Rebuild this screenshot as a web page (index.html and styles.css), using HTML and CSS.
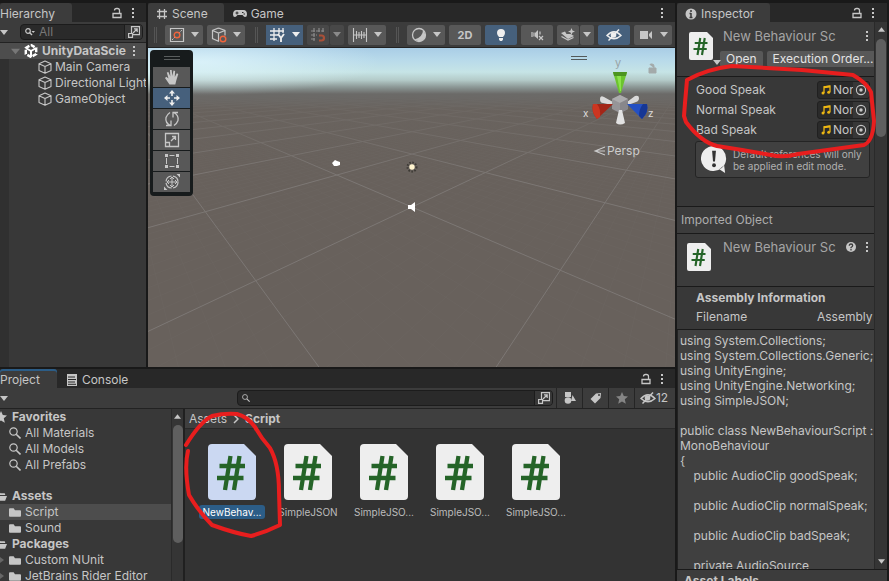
FILE: index.html
```html
<!DOCTYPE html>
<html lang="en">
<head>
<meta charset="utf-8">
<title>Unity Editor</title>
<link rel="stylesheet" href="styles.css">
</head>
<body>
<svg class="defs" aria-hidden="true">
  <defs>
    <symbol id="i-lock" viewBox="0 0 10 12"><path d="M1 6.500h8v4H1zM7.500 6V3.500Q7.500 1.500 5.500 1.500H4.500Q2.500 1.500 2.500 3.500" fill="none" stroke="currentColor" stroke-width="1.300"/></symbol>
    <symbol id="i-dots" viewBox="0 0 4 12"><path d="M1 1h2v2H1zM1 5h2v2H1zM1 9h2v2H1z" fill="currentColor"/></symbol>
    <symbol id="i-caret" viewBox="0 0 8 5"><path d="M0 0h8L4 5z" fill="currentColor"/></symbol>
    <symbol id="i-search" viewBox="0 0 12 12"><circle cx="4.500" cy="4.500" r="3.700" fill="none" stroke="currentColor" stroke-width="1.200"/><path d="M7.200 7.200 11.500 11.500" stroke="currentColor" stroke-width="1.600"/></symbol>
    <symbol id="i-pick" viewBox="0 0 12 12"><path d="M3.500 7V.6h8v8H5M.6 7.500h3.900v3.900H.6zM5 7l4-4M6 2.800h3.200V6" fill="none" stroke="currentColor" stroke-width="1.200"/></symbol>
    <symbol id="i-cube" viewBox="0 0 14 14"><path d="M7 1l6 2.800v6.800L7 13.300 1 10.600V3.800zM1 3.800l6 2.700 6-2.700M7 6.500v6.800" fill="none" stroke="currentColor" stroke-width="1.100" stroke-linejoin="round"/></symbol>
    <symbol id="i-grid" viewBox="0 0 12 12"><path d="M3.500 1v10M8.500 1v10M1 3.500h10M1 8.500h10" stroke="currentColor" stroke-width="1.300"/></symbol>
    <symbol id="i-folder" viewBox="0 0 13 11"><path d="M0 2Q0 1 1 1h4l1.500 2H12q1 0 1 1v5q0 1-1 1H1Q0 10 0 9z" fill="currentColor"/></symbol>
    <symbol id="i-open" viewBox="0 0 13 11"><path d="M0 9V2Q0 1 1 1h4l1 1h4q1 0 1 1v1H2zM2.500 5H13l-2 5H0z" fill="currentColor"/></symbol>
    <symbol id="i-star" viewBox="0 0 12 12"><path d="M6 0l1.800 4 4.200.4-3.200 2.900 1 4.500L6 9.500l-3.800 2.300 1-4.500L0 4.400 4.200 4z" fill="currentColor"/></symbol>
    <symbol id="i-file" viewBox="0 0 48 56"><path d="M4 0h32l12 12v40q0 4-4 4H4q-4 0-4-4V4q0-4 4-4z" fill="currentColor"/><path d="M22.500 12 17 46M31.500 12 26 46M11.500 22H37M9 34h26.500" stroke="#256428" stroke-width="4.300"/></symbol>
    <symbol id="i-note" viewBox="0 0 10 10"><path d="M3 8V1.800L9 1v6" fill="none" stroke="currentColor" stroke-width="1.300"/><path d="M3 2.300 9 1.500" stroke="currentColor" stroke-width="2"/><circle cx="2" cy="8" r="1.500" fill="currentColor"/><circle cx="7.700" cy="7.200" r="1.500" fill="currentColor"/></symbol>
    <symbol id="i-target" viewBox="0 0 12 12"><circle cx="6" cy="6" r="4.600" fill="none" stroke="currentColor" stroke-width="1.100"/><circle cx="6" cy="6" r="1.700" fill="currentColor"/></symbol>
    <symbol id="i-eye" viewBox="0 0 16 12"><path d="M1 6.500Q8-1 15 6.500 8 13 1 6.500z" fill="none" stroke="currentColor" stroke-width="1.500"/><circle cx="7.500" cy="6" r="2.800" fill="currentColor"/><path d="M2.500 11.500 13 .5" stroke="currentColor" stroke-width="1.500"/></symbol>
    <symbol id="i-up" viewBox="0 0 8 5"><path d="M0 5h8L4 0z" fill="currentColor"/></symbol>
  </defs>
</svg>

<main class="editor">
  <section class="panel hierarchy">
    <div class="tabs">
      <button class="tab active first">Hierarchy</button>
      <span class="tab-tools"><svg class="lock"><use href="#i-lock"/></svg><svg class="dots"><use href="#i-dots"/></svg></span>
    </div>
    <div class="bar search-bar">
      <svg class="caret"><use href="#i-caret"/></svg>
      <div class="search">
        <svg class="glass-menu" viewBox="0 0 10 8"><circle cx="3" cy="3" r="2.300" fill="none" stroke="currentColor" stroke-width="1.200"/><path d="M4.500 4.500 7 7" stroke="currentColor" stroke-width="1.400"/><path d="M6.500 3H10L8.200 5z" fill="currentColor"/></svg>
        <input type="text" aria-label="Search hierarchy" placeholder="All">
        <button class="pick" aria-label="Open search"><svg class="i12"><use href="#i-pick"/></svg></button>
      </div>
    </div>
    <ul class="tree">
      <li class="scene-row">
        <svg class="fold"><use href="#i-caret"/></svg>
        <svg class="i14 white" viewBox="0 0 14 14"><path d="M7 1 12.200 4v6L7 13 1.800 10V4z" fill="none" stroke="currentColor" stroke-width="2.400" stroke-dasharray="4.200 1.800"/><path d="M7 7V13M7 7 1.800 4M7 7l5.200-3" stroke="currentColor" stroke-width="2"/></svg>
        <b>UnityDataScie</b>
        <svg class="dots"><use href="#i-dots"/></svg>
      </li>
      <li><svg class="i14"><use href="#i-cube"/></svg><span>Main Camera</span></li>
      <li><svg class="i14"><use href="#i-cube"/></svg><span>Directional Light</span></li>
      <li><svg class="i14"><use href="#i-cube"/></svg><span>GameObject</span></li>
    </ul>
  </section>

  <section class="panel scene">
    <div class="tabs">
      <button class="tab active"><svg class="i12"><use href="#i-grid"/></svg>Scene</button>
      <button class="tab"><svg class="pad" viewBox="0 0 14 9"><path d="M3.500 1h7Q14 1 14 5.500 14 8 12 8 11 8 9.500 6h-5Q3 8 2 8 0 8 0 5.500 0 1 3.500 1z" fill="currentColor"/><path d="M2.500 4h3M4 2.500v3M9 3.500h1.500M10.500 5H12" stroke="#282828"/></svg>Game</button>
      <span class="tab-tools"><svg class="dots"><use href="#i-dots"/></svg></span>
    </div>
    <div class="bar tools">
      <i class="grip"></i>
      <button class="tool wide" aria-label="Pivot"><svg class="i16" viewBox="0 0 16 16"><path d="M1.500 1.500h13v13h-13z" fill="none" stroke="currentColor" stroke-width="1.200"/><path d="M3 13 13 3" stroke="currentColor" stroke-dasharray="2 1"/><circle cx="8" cy="8" r="2.800" fill="#585858" stroke="#f0643c" stroke-width="1.400"/></svg><svg class="caret"><use href="#i-caret"/></svg></button>
      <button class="tool wide" aria-label="Local"><svg class="i16" viewBox="0 0 16 16"><path d="M7.500 1l6.500 2.500v5M8 14.500 1.500 11.500V3.500L7.500 1M1.500 3.500l6 2.500L14 3.500M7.500 6v8" fill="none" stroke="currentColor" stroke-width="1.200"/><circle cx="12" cy="12" r="2.800" fill="#585858" stroke="#f0643c" stroke-width="1.400"/></svg><svg class="caret"><use href="#i-caret"/></svg></button>
      <i class="grip"></i>
      <span class="split on"><button aria-label="Grid"><svg class="i16" viewBox="0 0 16 16"><path d="M5 1v13M10 1v6M1 4h14M1 8h8M1 12h7M14 1v5" fill="none" stroke="currentColor" stroke-width="1.300"/><path d="M9 7l3 4 3-4M12 10.500V15" fill="none" stroke="currentColor" stroke-width="1.900"/></svg></button><button aria-label="Grid options"><svg class="caret"><use href="#i-caret"/></svg></button></span>
      <span class="split dim"><button aria-label="Snap"><svg class="i16" viewBox="0 0 16 16"><path d="M4 1v13M9 1v5M13 1v5M1 4h13M1 8h6M1 12h5" stroke="currentColor" stroke-width="1.200" stroke-dasharray="4 1"/><path d="M9 8.500h2.500q2.500 0 2.500 2.500t-2.500 2.500H9" fill="none" stroke="#a85038" stroke-width="2.200"/></svg></button><button aria-label="Snap options"><svg class="caret"><use href="#i-caret"/></svg></button></span>
      <button class="tool wide" aria-label="Increment"><svg class="i16" viewBox="0 0 16 16"><path d="M1.500 1v14M14.500 1v14M4.500 4v8M7 5v6M9.500 4v8M12 5v6M1 8h14" stroke="currentColor" stroke-width="1.100"/></svg><svg class="caret"><use href="#i-caret"/></svg></button>
      <i class="grip"></i>
      <button class="tool wide" aria-label="Shading"><svg class="i16" viewBox="0 0 16 16"><circle cx="8" cy="8" r="6.500" fill="none" stroke="currentColor" stroke-width="1.300"/><path d="M12 3q0 7-8.500 9.500 6 4 10-1 2-5-1.500-8.500z" fill="currentColor"/></svg><svg class="caret"><use href="#i-caret"/></svg></button>
      <button class="tool label">2D</button>
      <button class="tool on" aria-label="Lighting"><svg class="i16" viewBox="0 0 16 16"><path d="M8 2q4 0 4 4 0 2-2 4H6Q4 8 4 6q0-4 4-4zM6 11h4v1.500L9 14H7l-1-1.500z" fill="currentColor"/></svg></button>
      <button class="tool" aria-label="Audio"><svg class="i16" viewBox="0 0 16 16"><path d="M3 5v5M5 5.500v4" stroke="currentColor" stroke-width="1.200"/><path d="M6 6l3-3v9L6 9.500z" fill="currentColor"/><path d="M10 9l4 4M14 9l-4 4M11 4.500v3" stroke="currentColor" stroke-width="1.200"/></svg></button>
      <span class="split"><button aria-label="Effects"><svg class="i16" viewBox="0 0 16 16"><path d="M1 6l4-1.500 1.500 2.500h4L14 9l-6 3z" fill="currentColor"/><path d="M1.500 9.500 8 13l5.500-2.500" fill="none" stroke="currentColor" stroke-width="1.300"/><path d="M11.500 1l1 2.500L15 4.500l-2.500 1-1 2.500-1-2.500L8 4.500l2.500-1z" fill="currentColor"/></svg></button><button aria-label="Effect options"><svg class="caret"><use href="#i-caret"/></svg></button></span>
      <button class="tool on" aria-label="Visibility"><svg class="eye"><use href="#i-eye"/></svg></button>
      <button class="tool wide" aria-label="Camera"><svg class="i16" viewBox="0 0 16 16"><path d="M2 4h8v8H2zM11 7l3-3v8l-3-3z" fill="currentColor"/></svg><svg class="caret"><use href="#i-caret"/></svg></button>
    </div>
    <div class="viewport">
      <svg class="floor" id="floor" viewBox="0 0 527 319" preserveAspectRatio="xMidYMin slice"></svg>
      <div class="haze"></div>
      <svg class="marks" viewBox="0 0 527 319" preserveAspectRatio="xMidYMin slice">
        <path d="M184 115l3-3 2 1 3 1v3l-3 1h-3z" fill="#fff"/>
        <circle cx="264" cy="119" r="4.500" fill="none" stroke="#3c3934" stroke-width="2" stroke-dasharray="1.500 1.500"/><circle cx="264" cy="119" r="2.700" fill="#fff4cf"/>
        <path d="M260 157h3l4-3v10l-4-3h-3z" fill="#fff"/>
      </svg>
      <div class="palette">
        <i class="handle"></i>
        <button aria-label="View"><svg class="i16" viewBox="0 0 16 16"><path d="M5.500 15.500 1 9l1.300-1.200L4.500 9.500 2.800 3.500 4.400 3 6.300 7.500 6 1h1.700l.6 6 1.200-5.500 1.600.4L10.800 8l2-3.800 1.500.8-2 6.500-1 4z" fill="currentColor"/></svg></button>
        <button class="on" aria-label="Move"><svg class="i16" viewBox="0 0 16 16"><path d="M8 2v4M8 10v4M2 8h4M10 8h4" stroke="currentColor" stroke-width="1.600"/><path d="M8 0l3 3.500H5zM8 16l3-3.500H5zM0 8l3.500-3v6zM16 8l-3.500-3v6z" fill="currentColor"/></svg></button>
        <button aria-label="Rotate"><svg class="i16" viewBox="0 0 16 16"><path d="M6.500 14.500Q1 12 2 6.500 3 3.500 6 1.500M9.500 1.500Q15 4 14 9.500 13 12.500 10 14.500M2 14.500h5v-5M14 1.500H9v5" fill="none" stroke="currentColor" stroke-width="1.300"/></svg></button>
        <button aria-label="Scale"><svg class="i16" viewBox="0 0 16 16"><path d="M1.500 1.500h13v13h-13zM1.500 10.500h4v4M7 9l4.500-4.500M8 4.500h3.500V8" fill="none" stroke="currentColor" stroke-width="1.300"/></svg></button>
        <button aria-label="Rect"><svg class="i16" viewBox="0 0 16 16"><path d="M2.500 5v6M13.500 5v6M5.500 2.500h5M5.500 13.500h5" stroke="currentColor"/><path d="M1 1h3v3H1zM12 1h3v3h-3zM1 12h3v3H1zM12 12h3v3h-3z" fill="currentColor"/></svg></button>
        <button aria-label="Transform"><svg class="i16" viewBox="0 0 16 16"><circle cx="8" cy="8" r="6" fill="none" stroke="currentColor" stroke-width="1.200" stroke-dasharray="8 1.500"/><path d="M8 3v10M3 8h10M6 5l2-2 2 2M6 11l2 2 2-2M5 6 3 8l2 2M11 6l2 2-2 2" fill="none" stroke="currentColor"/><path d="M12.500 0H16v3.500zM0 12.500V16h3.500z" fill="currentColor"/></svg></button>
      </div>
      <svg class="gizmo" viewBox="0 0 104 112">
        <path d="M0 8.500h16M0 11.500h16" stroke="#53595a" stroke-width="1"/>
        <path d="M78 20h7v5h-7zM83 20v-2q0-2-2-2h-1q-1 0-1 1" fill="#a3aaaa" stroke="#a3aaaa" stroke-width="1"/>
        <path d="M42 54l-9-5q-4-2-4 2 0 4 3 4l9 2zM56 54l8-6q4-1 4 2t-3 4l-8 3z" fill="#dadada"/>
        <path d="M41 51l8-4 8 4v10l-8 4-8-4z" fill="#969598"/><path d="M41 51l8 4 8-4-8-4z" fill="#acacae"/><path d="M49 55l8-4v10l-8 4z" fill="#88878b"/>
        <path d="M42 24h14l-6 21h-2z" fill="#6cc42e"/><path d="M42 24h14l-1 4H43z" fill="#4d9420"/><path d="M46 28h4v15h-1z" fill="#8ce24d"/>
        <path d="M48 62h3l3 13q-5 3-9 0z" fill="#e2e2e2"/>
        <path d="M42 56 22 56q-2 8 4 15z" fill="#a32618"/><path d="M22 56q-2 8 4 15l3-2q1-8-3-13z" fill="#cc3621"/>
        <path d="M56 56l20 0q2 8-5 15z" fill="#2450c2"/><path d="M76 56q2 8-5 15l-3-3q0-7 4-12z" fill="#163795"/>
        <path d="M34 99l-10 4 10 4M24 103h10" fill="none" stroke="#c9c9c9" stroke-width="1.100"/>
        <text x="44" y="19" class="axis y">y</text><text x="12" y="69" class="axis small">x</text><text x="77" y="69" class="axis small">z</text>
        <text x="36" y="107" class="persp">Persp</text>
      </svg>
    </div>
  </section>

  <section class="panel inspector">
    <div class="tabs">
      <button class="tab active"><svg class="i12" viewBox="0 0 12 12"><circle cx="6" cy="6" r="5.500" fill="currentColor"/><path d="M6 2v2M6 5v5M4.500 5.500H6M4.500 9.500h3" stroke="#383838" stroke-width="1.500"/></svg>Inspector</button>
      <span class="tab-tools"><svg class="lock"><use href="#i-lock"/></svg><svg class="dots"><use href="#i-dots"/></svg></span>
    </div>
    <div class="inspect-body">
      <div class="inspect-main">
        <header class="asset-head">
          <svg class="file-small"><use href="#i-file"/></svg>
          <svg class="caret file-caret"><use href="#i-caret"/></svg>
          <div class="head-col">
            <div class="head-line"><h2>New Behaviour Sc</h2><svg class="dots"><use href="#i-dots"/></svg></div>
            <div class="head-buttons"><button>Open</button><button>Execution Order...</button></div>
          </div>
        </header>
        <div class="fields">
          <div class="field"><label for="f1">Good Speak</label><span class="object"><svg class="note"><use href="#i-note"/></svg><input id="f1" type="text" value="None (Audio Clip)"><button aria-label="Select clip"><svg class="i12"><use href="#i-target"/></svg></button></span></div>
          <div class="field"><label for="f2">Normal Speak</label><span class="object"><svg class="note"><use href="#i-note"/></svg><input id="f2" type="text" value="None (Audio Clip)"><button aria-label="Select clip"><svg class="i12"><use href="#i-target"/></svg></button></span></div>
          <div class="field"><label for="f3">Bad Speak</label><span class="object"><svg class="note"><use href="#i-note"/></svg><input id="f3" type="text" value="None (Audio Clip)"><button aria-label="Select clip"><svg class="i12"><use href="#i-target"/></svg></button></span></div>
          <div class="help"><svg class="bubble" viewBox="0 0 28 28"><path d="M14 0a13 13 0 1 1-2 26A13 13 0 0 1 14 0zM19 24l6 4-1-8z" fill="#eee"/><path d="M11.500 5h4l-1 11h-2z" fill="#333"/><circle cx="13.500" cy="20" r="2" fill="#333"/></svg><p>Default references will only be applied in edit mode.</p></div>
        </div>
        <h3 class="imported">Imported Object</h3>
        <header class="asset-head imported-head">
          <svg class="file-small"><use href="#i-file"/></svg>
          <div class="head-col">
            <div class="head-line"><h2>New Behaviour Sc</h2><svg class="q" viewBox="0 0 12 12"><circle cx="6" cy="6" r="5" fill="currentColor"/><path d="M4.300 4.700Q4.300 3 6 3t1.700 1.500Q7.700 5.500 6 6.500v.7M6 8v1.500" fill="none" stroke="#3c3c3c" stroke-width="1.300"/></svg><svg class="dots"><use href="#i-dots"/></svg></div>
          </div>
        </header>
        <div class="assembly"><b>Assembly Information</b><div class="pair"><span>Filename</span><span>Assembly</span></div></div>
        <pre class="code">using System.Collections;
using System.Collections.Generic;
using UnityEngine;
using UnityEngine.Networking;
using SimpleJSON;

public class NewBehaviourScript : MonoBehaviour
{
    public AudioClip goodSpeak;

    public AudioClip normalSpeak;

    public AudioClip badSpeak;

    private AudioSource</pre>
      </div>
      <div class="scroll"><svg class="arrow"><use href="#i-up"/></svg><i class="thumb"></i><svg class="arrow end"><use href="#i-caret"/></svg></div>
    </div>
    <footer class="labels">Asset Labels</footer>
  </section>

  <section class="panel project">
    <div class="tabs">
      <button class="tab active first focus">Project</button>
      <button class="tab"><svg class="i12" viewBox="0 0 12 12"><path d="M1 0h10v12H1z" fill="currentColor"/><path d="M2 3h7M2 5.500h8M2 8h7M2 10.300h8" stroke="#282828"/></svg>Console</button>
      <span class="tab-tools"><svg class="lock"><use href="#i-lock"/></svg><svg class="dots"><use href="#i-dots"/></svg></span>
    </div>
    <div class="bar project-bar">
      <svg class="caret"><use href="#i-caret"/></svg>
      <div class="search">
        <svg class="glass"><use href="#i-search"/></svg>
        <input type="text" aria-label="Search project">
        <button class="pick" aria-label="Open search"><svg class="i12"><use href="#i-pick"/></svg></button>
      </div>
      <button class="flat" aria-label="Filter by type"><svg class="i12" viewBox="0 0 12 12"><path d="M1 0h6v5H1zM8.500 3l3.500 6H7z" fill="currentColor"/><circle cx="4" cy="8.500" r="3.300" fill="currentColor"/></svg></button>
      <button class="flat" aria-label="Filter by label"><svg class="i12" viewBox="0 0 12 12"><path d="M6 1.500 11 1l-.5 5L5 11.500.500 7z" fill="currentColor"/><circle cx="9" cy="3" r="1" fill="#3c3c3c"/></svg></button>
      <button class="flat off" aria-label="Favorite"><svg class="i12"><use href="#i-star"/></svg></button>
      <button class="flat count"><svg class="eye"><use href="#i-eye"/></svg>12</button>
    </div>
    <div class="project-body">
      <nav class="folders">
        <ul>
          <li class="root"><svg class="i12"><use href="#i-star"/></svg><b>Favorites</b></li>
          <li><svg class="i12"><use href="#i-search"/></svg>All Materials</li>
          <li><svg class="i12"><use href="#i-search"/></svg>All Models</li>
          <li><svg class="i12"><use href="#i-search"/></svg>All Prefabs</li>
        </ul>
        <ul>
          <li class="root"><svg class="fold12"><use href="#i-open"/></svg><b>Assets</b></li>
          <li class="picked"><svg class="fold12"><use href="#i-folder"/></svg>Script</li>
          <li><svg class="fold12"><use href="#i-folder"/></svg>Sound</li>
          <li class="root"><svg class="fold12"><use href="#i-open"/></svg><b>Packages</b></li>
          <li class="closed"><svg class="fold12"><use href="#i-folder"/></svg>Custom NUnit</li>
          <li class="closed"><svg class="fold12"><use href="#i-folder"/></svg>JetBrains Rider Editor</li>
        </ul>
      </nav>
      <div class="scroll"><svg class="arrow"><use href="#i-up"/></svg><i class="thumb tall"></i></div>
      <div class="assets">
        <div class="crumbs"><a href="#assets">Assets</a><svg class="chev" viewBox="0 0 6 10"><path d="M1 1l4 4-4 4" fill="none" stroke="currentColor" stroke-width="1.500"/></svg><b>Script</b></div>
        <div class="files">
          <figure class="selected"><svg><use href="#i-file"/></svg><figcaption>NewBehav...</figcaption></figure>
          <figure><svg><use href="#i-file"/></svg><figcaption>SimpleJSON</figcaption></figure>
          <figure><svg><use href="#i-file"/></svg><figcaption>SimpleJSO...</figcaption></figure>
          <figure><svg><use href="#i-file"/></svg><figcaption>SimpleJSO...</figcaption></figure>
          <figure><svg><use href="#i-file"/></svg><figcaption>SimpleJSO...</figcaption></figure>
        </div>
      </div>
    </div>
  </section>
</main>

<svg class="pen pen-right" viewBox="0 0 194 98" aria-hidden="true"><path d="M4 19Q24 8 49 5 85 7 119 9L170 14Q184 22 188 31L191 60Q190 80 181 84 145 89 115 93 100 97 88 94 60 89 34 85 18 81 3 61L1 55 2 42 4 19"/></svg>
<svg class="pen pen-left" viewBox="0 0 98 128" aria-hidden="true"><path d="M2 33Q16 10 28 4 40 1 53 2 64 5 71 15 77 26 86 36 95 52 95 80L96 113Q82 120 67 124 50 121 28 113 15 100 5 83 0 55 4 39"/></svg>
<script src="floor.js"></script>
</body>
</html>
```
FILE: styles.css
```css
* { box-sizing: border-box; }
body { margin: 0; background: #191919; color: #c6c6c6; font: 12px/16px Inter, "Liberation Sans", sans-serif; overflow: hidden; position: relative; }
button, input { font: inherit; color: inherit; border: 0; padding: 0; margin: 0; background: none; min-width: 0; }
ul, h2, h3, p, pre, figure { margin: 0; padding: 0; list-style: none; font: inherit; }
svg { display: block; flex: none; }
a { color: inherit; text-decoration: none; }
b { font-weight: 700; }
.defs { position: absolute; width: 0; height: 0; }

.editor {
  display: grid; height: 100vh; padding: 3px 2px 0 0; gap: 2px;
  grid-template-columns: minmax(0, 146fr) minmax(0, 527fr) minmax(0, 210fr);
  grid-template-rows: minmax(0, 364fr) minmax(0, 212fr);
}
.panel { display: flex; flex-direction: column; background: #383838; overflow: hidden; min-width: 0; }
.inspector { grid-column: 3; grid-row: 1 / 3; }
.project { grid-column: 1 / 3; grid-row: 2; }

.i12 { width: 12px; height: 12px; }
.i14 { width: 14px; height: 14px; }
.i16 { width: 16px; height: 16px; }
.lock { width: 10px; height: 12px; }
.dots { width: 4px; height: 12px; }
.caret { width: 8px; height: 5px; }
.eye { width: 16px; height: 12px; }
.white { color: #fff; }

.tabs { display: flex; height: 19px; background: #282828; flex: none; }
.tab { display: flex; align-items: center; gap: 4px; padding: 2px 16px 0 8px; border-radius: 3px 3px 0 0; white-space: nowrap; }
.tab.active { background: #3c3c3c; }
.tab.first { padding: 2px 17px 0 0; }
.tab + .tab { padding-left: 9px; }
.tab.focus { box-shadow: inset 0 2px #2c5d87; }
.pad { width: 14px; height: 9px; }
.tab-tools { display: flex; align-items: center; gap: 9px; margin-left: auto; padding-right: 11px; }
.bar { display: flex; align-items: center; background: #3c3c3c; flex: none; }

.search { display: flex; align-items: center; flex: 1; height: 16px; background: #2a2a2a; border: 1px solid #1c1c1c; border-radius: 4px; overflow: hidden; min-width: 0; }
.search input { flex: 1; width: 0; outline: 0; }
.search input::placeholder { color: #777; opacity: 1; }
.glass { width: 8px; height: 8px; margin: 0 6px 0 4px; }
.glass-menu { width: 10px; height: 8px; margin: 0 4px; }
.pick { height: 14px; width: 18px; padding-left: 3px; background: #383838; border-left: 1px solid #1c1c1c; }
.search-bar { height: 21px; padding-right: 3px; gap: 12px; border-bottom: 1px solid #222; }

.tree { flex: 1; background: linear-gradient(90deg, #303030 9px, #383838 9px); }
.tree li { display: flex; align-items: center; gap: 3px; height: 16px; padding-left: 38px; white-space: nowrap; }
.tree .scene-row { background: #4d4d4d; padding: 0 10px 0 11px; gap: 4px; }
.scene-row .fold { width: 9px; height: 7px; color: #777; }
.scene-row b { flex: 1; overflow: hidden; }

.tools { height: 26px; gap: 4px; padding: 0 3px 0 6px; border-bottom: 1px solid #222; }
.grip { width: 3px; height: 16px; border: solid #555; border-width: 0 1px; margin: 0 4px 0 6px; flex: none; }
.grip:first-child { margin-left: 0; }
.tool { display: flex; align-items: center; justify-content: center; gap: 6px; width: 32px; height: 20px; background: #585858; border-radius: 2px; flex: none; }
.wide { width: 38px; }
.label { font-weight: 700; font-size: 11px; }
.split { display: grid; grid-template-columns: 22px 14px; gap: 1px; height: 20px; flex: none; }
.split button { display: flex; align-items: center; justify-content: center; background: #585858; border-radius: 2px; }
.on, .split.on button { background: #46607c; color: #eee; }
.split.dim button { background: #484848; color: #8a8a8a; }

.viewport { position: relative; flex: 1; overflow: hidden; background: #68615c; }
.floor, .haze, .marks { position: absolute; inset: 0; width: 100%; height: 100%; }
.haze { background:
  radial-gradient(ellipse 34% 34px at 10% 14px, rgba(230, 250, 255, .7), transparent),
  linear-gradient(#a9cde6 0, #b8daea 12px, #c6e4e6 24px, #b4cbc9 32px, #8c9896 39px, #6b6a68 46px, rgba(104, 98, 93, .75) 62px, rgba(104, 98, 93, 0) 130px); }
.major { stroke: #7c7774; stroke-width: 1; }
.minor { stroke: #6f6965; stroke-width: 1; opacity: .35; }
.palette { position: absolute; left: 2px; top: 2px; display: flex; flex-direction: column; gap: 1px; padding: 6px 3px 4px; background: #171b1c; border-radius: 4px; }
.handle { width: 16px; height: 4px; margin: 0 auto 6px; border: solid #5a5e5e; border-width: 1px 0; }
.palette button { display: flex; align-items: center; justify-content: center; width: 37px; height: 20px; background: #585858; }
.palette button.on { background: #46607c; }
.gizmo { position: absolute; right: 0; top: 0; width: 104px; height: 112px; }
.axis { font-size: 11px; fill: #ddd; }
.axis.y { fill: #98a3a5; }
.small { font-size: 10px; }
.persp { font-size: 12px; fill: #ccc; }

.inspect-body { display: flex; flex: 1; min-height: 0; }
.inspect-main { flex: 1; min-width: 0; overflow: hidden; }
.scroll { display: flex; flex-direction: column; align-items: center; width: 12px; background: #353535; border-left: 1px solid #2a2a2a; padding: 5px 0; flex: none; }
.inspector .scroll { width: 13px; }
.inspector .tab-tools { padding-right: 12px; }
.arrow { width: 7px; height: 5px; flex: none; }
.thumb { width: 10px; height: 98px; margin-top: 7px; border-radius: 5px; background: #5f5f5f; }
.thumb.tall { height: 118px; margin-top: 6px; }
.end { margin-top: auto; }
.asset-head { position: relative; display: flex; height: 55px; padding: 6px 0 0 12px; border-bottom: 1px solid #1a1a1a; background: #3c3c3c; }
.file-small { width: 24px; height: 28px; margin-top: 4px; color: #eee; }
.file-caret { position: absolute; left: 36px; top: 38px; }
.head-col { flex: 1; min-width: 0; margin-left: 7px; }
.head-line { display: flex; align-items: center; height: 16px; padding: 0 5px 0 3px; gap: 8px; }
.head-line h2 { flex: 1; font-size: 13px; color: #a5a5a5; white-space: nowrap; overflow: hidden; }
.q { width: 12px; height: 12px; }
.head-buttons { display: flex; gap: 4px; margin-top: 7px; }
.head-buttons button { height: 16px; padding: 0 6px; background: #585858; border-radius: 2px; color: #e4e4e4; white-space: nowrap; flex: none; }
.fields { height: 130px; padding: 3px 4px 0 18px; border-bottom: 1px solid #1a1a1a; }
.field { display: flex; align-items: center; height: 20px; padding-left: 1px; justify-content: space-between; }
.object { display: flex; align-items: center; width: 53px; height: 18px; border: 1px solid #202020; border-radius: 3px; background: #2a2a2a; overflow: hidden; }
.object input { width: 19px; flex: 1; }
.object button { width: 16px; height: 16px; padding-left: 2px; background: #373737; }
.note { width: 10px; height: 10px; margin: 0 2px 0 3px; color: #ecb613; }
.help { display: flex; align-items: center; gap: 5px; height: 37px; margin-top: 1px; padding: 0 5px; background: #404040; border: 1px solid #242424; border-radius: 3px; }
.help p { font-size: 10px; line-height: 12px; color: #b0b0b0; }
.bubble { width: 27px; height: 27px; }
.imported { height: 27px; padding: 5px 4px; background: #3c3c3c; border-bottom: 1px solid #1a1a1a; color: #adadad; }
.imported-head { height: 53px; padding: 5px 0 0 10px; }
.imported-head .head-col { margin-left: 9px; }
.assembly { height: 43px; padding: 3px 4px 0 19px; border-bottom: 1px solid #1a1a1a; }
.pair { display: grid; grid-template-columns: 1fr 53px; margin-top: 3px; white-space: nowrap; }
.code { padding: 3px 0 0 2px; line-height: 15px; white-space: pre-wrap; background: #404040; border-left: 1px solid #222; }
.labels { height: 12px; padding: 3px 7px; font-weight: 700; background: #3c3c3c; border-top: 1px solid #1a1a1a; overflow: hidden; flex: none; }

.project-bar { height: 21px; border-bottom: 1px solid #222; }
.project-bar .search { margin: 0 3px 0 229px; }
.flat { display: flex; align-items: center; justify-content: center; width: 26px; height: 20px; border-left: 1px solid #252525; }
.flat.off { color: #858585; }
.flat.count { width: 41px; padding-right: 2px; }
.project-body { display: flex; flex: 1; min-height: 0; }
.folders { width: 171px; overflow: hidden; flex: none; }
.folders ul + ul { margin-top: 15px; }
.folders li { display: flex; align-items: center; gap: 4px; height: 16px; padding-left: 9px; white-space: nowrap; position: relative; }
.folders .root { padding-left: 0; margin-left: -5px; gap: 5px; }
.folders .picked { background: #4d4d4d; }
.closed::before { content: ""; position: absolute; left: 0; border: solid transparent; border-width: 3px 0 3px 4px; border-left-color: #666; }
.fold12 { width: 12px; height: 11px; }
.assets { flex: 1; min-width: 0; margin-left: 2px; background: #333; box-shadow: -2px 0 #202020; }
.crumbs { display: flex; align-items: center; gap: 6px; height: 20px; padding-left: 4px; background: #3f3f3f; border-bottom: 1px solid #292929; }
.chev { width: 6px; height: 10px; }
.files { display: flex; gap: 8px; padding: 15px 0 0 13px; }
.files figure { display: flex; flex-direction: column; align-items: center; gap: 5px; width: 68px; color: #eee; }
.files svg { width: 48px; height: 56px; }
.files figcaption { height: 14px; padding: 0 4px; line-height: 14px; font-size: 10px; color: #bcbcbc; border-radius: 3px; }
.files .selected { color: #cbd8f2; }
.files .selected figcaption { background: #2c5d87; color: #fff; }

.pen { position: absolute; fill: none; stroke: #e81e1e; stroke-width: 4px; stroke-linejoin: round; stroke-linecap: round; overflow: visible; pointer-events: none; }
.pen-right { right: 12px; top: 61px; width: 194px; height: 98px; }
.pen-left { left: 184px; bottom: 41px; width: 98px; height: 128px; }
```
FILE: floor.js
```js
// Projects the ground grid into the viewport and draws its lines.
const floor = document.getElementById("floor");

function project(u, v) {
  const depth = 1.453 + 0.475 * u + 0.525 * v;
  return depth > 0.02
    ? [264 + (145 * (v - u)) / depth, 29 + 189 / depth]
    : null;
}

function addLine(a, b, kind) {
  if (!a || !b) return;
  const line = document.createElementNS("http://www.w3.org/2000/svg", "line");
  line.setAttribute("x1", a[0]);
  line.setAttribute("y1", a[1]);
  line.setAttribute("x2", b[0]);
  line.setAttribute("y2", b[1]);
  line.setAttribute("class", kind);
  floor.appendChild(line);
}

function drawGrid(step, from, to, kind) {
  for (let i = from; i <= to; i += 1) {
    const c = i * step;
    const nearV = (-1.4 - 0.475 * c) / 0.525;
    const nearU = (-1.4 - 0.525 * c) / 0.475;
    addLine(project(c, nearV), project(c, nearV + 60), kind);
    addLine(project(nearU, c), project(nearU + 60, c), kind);
  }
}

drawGrid(0.1, -30, 50, "minor");
drawGrid(1, -14, 24, "major");
```
